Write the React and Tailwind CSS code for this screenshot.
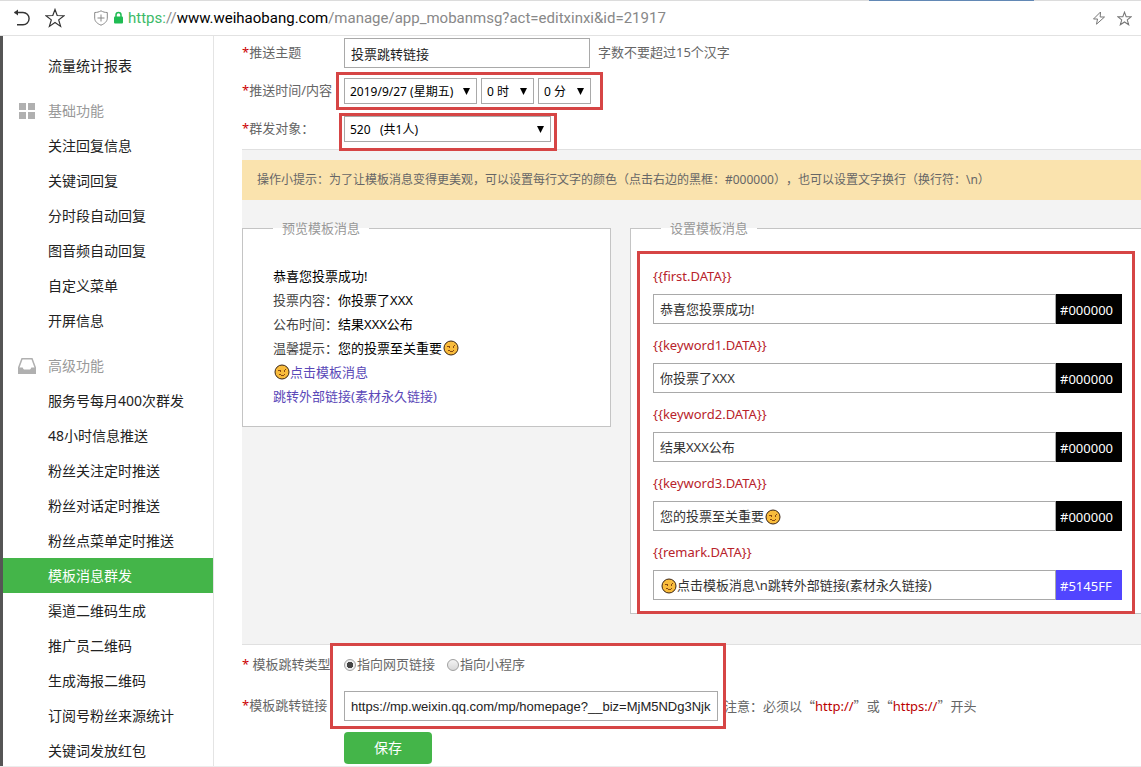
import React from 'react';

const SIDEBAR = [
  { items: ['流量统计报表'] },
  {
    title: '基础功能',
    icon: GridIcon,
    items: ['关注回复信息', '关键词回复', '分时段自动回复', '图音频自动回复', '自定义菜单', '开屏信息'],
  },
  {
    title: '高级功能',
    icon: InboxIcon,
    items: [
      '服务号每月400次群发',
      '48小时信息推送',
      '粉丝关注定时推送',
      '粉丝对话定时推送',
      '粉丝点菜单定时推送',
      '模板消息群发',
      '渠道二维码生成',
      '推广员二维码',
      '生成海报二维码',
      '订阅号粉丝来源统计',
      '关键词发放红包',
    ],
  },
];

const ACTIVE = '模板消息群发';

const FIELDS = [
  { name: 'first', value: '恭喜您投票成功!', color: '#000000' },
  { name: 'keyword1', value: '你投票了XXX', color: '#000000' },
  { name: 'keyword2', value: '结果XXX公布', color: '#000000' },
  { name: 'keyword3', value: '您的投票至关重要', color: '#000000', emoji: 'after' },
  { name: 'remark', value: '点击模板消息\\n跳转外部链接(素材永久链接)', color: '#5145FF', emoji: 'before' },
];

const PREVIEW = [
  { label: '投票内容：', text: '你投票了XXX' },
  { label: '公布时间：', text: '结果XXX公布' },
  { label: '温馨提示：', text: '您的投票至关重要', emoji: true },
];

function GridIcon() {
  return (
    <svg width="18" height="18" viewBox="0 0 18 18" fill="#b0b0b0">
      <path d="M1 1h7v7H1zM10 1h7v7h-7zM1 10h7v7H1zM10 10h7v7h-7z" />
    </svg>
  );
}

function InboxIcon() {
  return (
    <svg width="18" height="18" viewBox="0 0 18 18">
      <path d="M4 1.8h10l3.2 8.7v5.700H.8v-5.700z" fill="none" stroke="#b0b0b0" strokeWidth="1.5" />
      <path d="M.2 10.5h4.500c.5 1.500 1 2 2 2h4.600c1 0 1.500-.5 2-2h4.500V17H.2z" fill="#b0b0b0" />
    </svg>
  );
}

function WinkFace() {
  return (
    <svg width="17" height="16" viewBox="0 0 17 16" className="shrink-0">
      <circle cx="9" cy="8" r="7" fill="#f9bc3c" stroke="#3b2413" strokeWidth="1" />
      <g fill="#8a4a12">
        <rect x="5" y="6" width="3" height="1" />
        <rect x="7" y="7" width="1" height="1" />
        <rect x="11" y="6" width="1" height="2" />
        <rect x="12" y="5" width="1" height="1" />
        <rect x="6" y="10" width="2" height="1" />
        <rect x="8" y="11" width="3" height="1" />
        <rect x="11" y="10" width="1" height="1" />
      </g>
    </svg>
  );
}

function AddressBar() {
  return (
    <header className="relative flex h-9 shrink-0 items-center border-t border-b border-t-[#dcdcdc] border-b-[#e2e2e2]">
      <div className="absolute -top-px left-[869px] h-px w-[165px] bg-[#6288b5]" />
      <button aria-label="后退" className="ml-[13px]">
        <svg width="18" height="18" viewBox="0 0 18 18" fill="none" stroke="#333" strokeWidth="1.4">
          <path d="M1.500 3.500h8.500a5.800 5.800 0 0 1 0 12.200H4" />
          <path d="M5 .6 1 3.500l4 3z" fill="#333" stroke="none" />
        </svg>
      </button>
      <button aria-label="收藏夹" className="ml-[14px]">
        <svg width="20" height="20" viewBox="0 0 20 20" fill="none" stroke="#333" strokeWidth="1.200">
          <path d="m10 1.500 2.200 6 6.800.2-5.300 4.200 1.900 6.500L10 14.600l-5.600 3.800 1.900-6.500L1 7.700l6.800-.2z" />
        </svg>
      </button>
      <svg className="ml-7" width="16" height="16" viewBox="0 0 16 16" fill="none" stroke="#888" strokeWidth="1">
        <path d="M8 .8c2 1.200 4 1.700 6.300 1.700v5.700c0 3.300-2.800 5.500-6.300 7-3.500-1.500-6.300-3.700-6.300-7V2.500C4 2.500 6 2 8 .8zM8 4.500v7M4.500 8h7" />
      </svg>
      <svg className="ml-1" width="11" height="14" viewBox="0 0 11 14">
        <path d="M3 6V4a2.500 2.500 0 0 1 5 0v2" fill="none" stroke="#1fbc53" strokeWidth="1.500" />
        <rect x="1" y="5.500" width="9" height="7" rx="1" fill="#1fbc53" />
      </svg>
      <div className="ml-1 flex-1 font-['Roboto',sans-serif] text-[15px] text-[#888]">
        <span className="text-[#3cba68]">https:</span>//
        <span className="text-black">www.weihaobang.com</span>/manage/app_mobanmsg?act=editxinxi&amp;id=21917
      </div>
      <button aria-label="极速模式" className="mr-[11px]">
        <svg width="14" height="14" viewBox="0 0 14 14" fill="none" stroke="#777" strokeWidth="1">
          <path d="M8.500 1 1.500 8h4L4.500 13.200l8-7.200H8.200z" strokeLinejoin="round" />
        </svg>
      </button>
      <button aria-label="添加收藏" className="mr-[9px]">
        <svg width="15" height="15" viewBox="0 0 20 20" fill="none" stroke="#777" strokeWidth="1.400">
          <path d="m10 1.500 2.200 6 6.800.2-5.300 4.200 1.900 6.500L10 14.600l-5.600 3.800 1.900-6.500L1 7.700l6.800-.2z" />
        </svg>
      </button>
    </header>
  );
}

function Sidebar() {
  return (
    <nav className="w-[214px] shrink-0 overflow-hidden border-r border-l-3 border-r-[#e4e4e4] border-l-[#555] pt-3 text-sm text-[#222]">
      {SIDEBAR.map((group, i) => (
        <div key={i} className="mb-[10px]">
          {group.title && (
            <h2 className="flex h-[35px] items-center text-[#999]">
              <span className="mr-3 ml-[15px]">
                <group.icon />
              </span>
              {group.title}
            </h2>
          )}
          <ul>
            {group.items.map((item) => (
              <li key={item}>
                <a
                  href="#"
                  className={
                    item === ACTIVE
                      ? 'block h-[35px] bg-[#44b549] pl-[45px] leading-[35px] text-white'
                      : 'block h-[35px] pl-[45px] leading-[35px]'
                  }
                >
                  {item}
                </a>
              </li>
            ))}
          </ul>
        </div>
      ))}
    </nav>
  );
}

// Red outline drawn over a group of controls
function Highlight({ className }) {
  return <div className={`pointer-events-none absolute border-3 border-[#d64545] ${className}`} />;
}

function Select({ id, label, value, className }) {
  return (
    <div className={`relative ${className}`}>
      <select
        id={id}
        aria-label={label}
        className="block h-[26px] w-full appearance-none border border-[#a9a9a9] bg-white pt-px pl-[5px] text-xs text-black"
      >
        <option>{value}</option>
      </select>
      <svg className="pointer-events-none absolute top-[10px] right-[7px]" width="7" height="7" viewBox="0 0 7 7">
        <path d="M0 0h7L3.500 7z" />
      </svg>
    </div>
  );
}

function Label({ htmlFor, children }) {
  return (
    <label htmlFor={htmlFor} className="w-[102px] shrink-0 whitespace-nowrap">
      <span className="text-[#c00]">*</span>
      {children}
    </label>
  );
}

// Full-width Chinese quotation marks around a red scheme
function Quoted({ children }) {
  return (
    <span lang="zh-CN" className="font-['Noto_Sans_CJK_SC',sans-serif]">
      “<span className="font-['Noto_Sans',sans-serif] text-[#b00]">{children}</span>”
    </span>
  );
}

function Preview() {
  return (
    <fieldset className="w-[369px] shrink-0 self-start border border-[#c4c4c4] bg-white pb-[18px] pl-[30px]">
      <legend className="h-5 px-[9px] leading-5 text-[#999]">预览模板消息</legend>
      <div className="pt-[26px] leading-6 text-[#444]">
        <p className="text-black">恭喜您投票成功!</p>
        {PREVIEW.map((row) => (
          <p key={row.label} className="flex items-center">
            {row.label}
            <span className="text-black">{row.text}</span>
            {row.emoji && <WinkFace />}
          </p>
        ))}
        <a href="#" className="flex items-center text-[#5a48b8]">
          <WinkFace />
          点击模板消息
        </a>
        <a href="#" className="block text-[#5a48b8]">跳转外部链接(素材永久链接)</a>
      </div>
    </fieldset>
  );
}

function Settings() {
  return (
    <fieldset className="relative min-w-0 flex-1 border border-r-0 border-[#c4c4c4] bg-white pr-[19px] pb-[10px] pl-[22px]">
      <legend className="ml-2 h-5 px-[9px] leading-5 text-[#999]">设置模板消息</legend>
      <div className="pt-5">
        {FIELDS.map((f) => (
          <div key={f.name} className="mb-[3px]">
            <label htmlFor={f.name} className="block h-9 leading-9 text-[#b8232b]">
              {`{{${f.name}.DATA}}`}
            </label>
            <div className="flex">
              <div className="flex h-[30px] min-w-0 flex-1 items-center border border-[#a9a9a9] px-[6px] pt-0.5">
                {f.emoji === 'before' && <WinkFace />}
                <input
                  id={f.name}
                  defaultValue={f.value}
                  className={
                    f.emoji === 'after' ? 'field-sizing-content text-[#333] outline-none' : 'min-w-0 flex-1 text-[#333] outline-none'
                  }
                />
                {f.emoji === 'after' && <WinkFace />}
              </div>
              <input
                aria-label={`${f.name} 颜色`}
                defaultValue={f.color}
                style={{ backgroundColor: f.color }}
                className="h-[30px] w-[66px] pt-0.5 pl-1 text-white"
              />
            </div>
          </div>
        ))}
      </div>
      <Highlight className="top-[13px] right-[6px] -bottom-px left-[6px]" />
    </fieldset>
  );
}

function Radio({ id, children, checked }) {
  return (
    <span className="flex items-center">
      <input
        type="radio"
        name="jump"
        id={id}
        defaultChecked={checked}
        className="size-3 appearance-none rounded-full border border-[#a0a0a0] bg-linear-to-b from-[#f4f4f4] to-[#d8d8d8] checked:bg-[radial-gradient(circle,#444_0_3px,#eee_3px)]"
      />
      <label htmlFor={id} className="pl-px">
        {children}
      </label>
    </span>
  );
}

export default function App() {
  return (
    <div className="flex h-screen flex-col overflow-hidden border-b border-[#ececec] bg-white font-['Noto_Sans','Noto_Sans_CJK_SC',sans-serif] text-[13px] text-[#666]">
      <AddressBar />
      <div className="flex min-h-0 flex-1">
        <Sidebar />
        <main className="min-w-0 flex-1 pl-7">
          <div className="mb-0.5 flex h-[34px] items-center">
            <Label htmlFor="topic">推送主题</Label>
            <input
              id="topic"
              defaultValue="投票跳转链接"
              className="h-[30px] w-[246px] border border-[#a9a9a9] px-[6px] text-[#222]"
            />
            <span className="ml-2">字数不要超过15个汉字</span>
          </div>
          <div className="flex h-[38px] items-center">
            <Label htmlFor="date">推送时间/内容</Label>
            <div className="relative flex gap-1">
              <Select id="date" value="2019/9/27 (星期五)" className="w-[133px]" />
              <Select id="hour" label="时" value="0 时" className="w-[53px]" />
              <Select id="minute" label="分" value="0 分" className="w-[53px]" />
              <Highlight className="-top-[6px] -right-3 -bottom-[6px] -left-2" />
            </div>
          </div>
          <div className="flex h-[38px] items-center">
            <Label htmlFor="target">群发对象：</Label>
            <div className="relative">
              <Select id="target" value="520&nbsp;&nbsp; (共1人)" className="w-[207px]" />
              <Highlight className="-top-[3px] -right-[6px] -bottom-[9px] -left-[5px]" />
            </div>
          </div>

          <section className="mt-px border-t border-b border-[#e0e0e0] bg-[#f3f3f3] pt-[10px] pb-[30px]">
            <p className="h-10 bg-[#fae3ae] pl-[15px] text-xs leading-10 [text-spacing-trim:space-all]">
              操作小提示：为了让模板消息变得更美观，可以设置每行文字的颜色（点击右边的黑框：#000000），也可以设置文字换行（换行符：\n）
            </p>
            <div className="mt-[18px] flex gap-[19px]">
              <Preview />
              <Settings />
            </div>
          </section>

          <div className="relative">
            <div className="flex h-10 items-center">
              <Label htmlFor="web"> 模板跳转类型</Label>
              <div className="flex gap-3">
                <Radio id="web" checked>指向网页链接</Radio>
                <Radio id="mini">指向小程序</Radio>
              </div>
            </div>
            <div className="flex h-[42px] items-center">
              <Label htmlFor="link">模板跳转链接</Label>
              <input
                id="link"
                defaultValue="https://mp.weixin.qq.com/mp/homepage?__biz=MjM5NDg3Njk"
                className="h-[30px] w-[374px] border border-[#a9a9a9] px-[6px] font-['Liberation_Sans',sans-serif] text-[#222]"
              />
              <p className="ml-[6px] whitespace-nowrap [text-spacing-trim:space-all]">
                注意：必须以<Quoted>http://</Quoted>或<Quoted>https://</Quoted>开头
              </p>
            </div>
            <Highlight className="-top-[2px] -bottom-[2px] left-[88px] w-[396px]" />
          </div>
          <button className="mt-[5px] ml-[102px] h-8 w-[88px] rounded bg-[#44b549] text-sm text-white">保存</button>
        </main>
      </div>
    </div>
  );
}
